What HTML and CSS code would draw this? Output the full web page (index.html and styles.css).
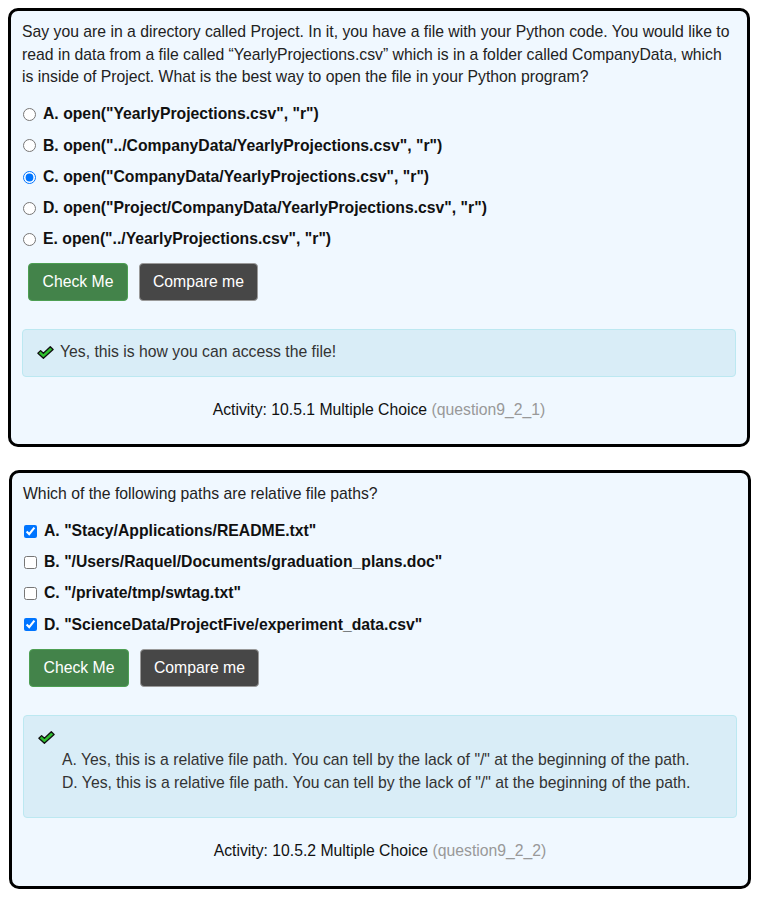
FILE: index.html
```html
<!DOCTYPE html>
<html>
<head>
<meta charset="utf-8">
<link rel="stylesheet" href="styles.css">
</head>
<body>
<div class="card">
  <p class="question">Say you are in a directory called Project. In it, you have a file with your Python code. You would like to read in data from a file called “YearlyProjections.csv” which is in a folder called CompanyData, which is inside of Project. What is the best way to open the file in your Python program?</p>
  <div class="options">
    <label class="option"><input type="radio" name="q1">A. open("YearlyProjections.csv", "r")</label>
    <label class="option"><input type="radio" name="q1">B. open("../CompanyData/YearlyProjections.csv", "r")</label>
    <label class="option"><input type="radio" name="q1" checked>C. open("CompanyData/YearlyProjections.csv", "r")</label>
    <label class="option"><input type="radio" name="q1">D. open("Project/CompanyData/YearlyProjections.csv", "r")</label>
    <label class="option"><input type="radio" name="q1">E. open("../YearlyProjections.csv", "r")</label>
  </div>
  <div class="buttons">
    <button class="btn btn-check">Check Me</button>
    <button class="btn btn-compare">Compare me</button>
  </div>
  <div class="feedback">
    <svg class="ok" width="17" height="13" viewBox="0 0 17 13"><path d="M0.9 7.2 L3.6 4.6 L6.4 7.3 L13.3 0.8 L16.1 3.5 L6.4 12.3 Z" fill="#2fc12f" stroke="#111" stroke-width="1.3" stroke-linejoin="round"/></svg>
    <span>Yes, this is how you can access the file!</span>
  </div>
  <div class="activity">Activity: 10.5.1 Multiple Choice <span class="qid">(question9_2_1)</span></div>
</div>

<div class="card card2">
  <p class="question">Which of the following paths are relative file paths?</p>
  <div class="options">
    <label class="option"><input type="checkbox" checked>A. "Stacy/Applications/README.txt"</label>
    <label class="option"><input type="checkbox">B. "/Users/Raquel/Documents/graduation_plans.doc"</label>
    <label class="option"><input type="checkbox">C. "/private/tmp/swtag.txt"</label>
    <label class="option"><input type="checkbox" checked>D. "ScienceData/ProjectFive/experiment_data.csv"</label>
  </div>
  <div class="buttons">
    <button class="btn btn-check">Check Me</button>
    <button class="btn btn-compare">Compare me</button>
  </div>
  <div class="feedback feedback-multi">
    <div class="icon-line"><svg class="ok" width="17" height="13" viewBox="0 0 17 13"><path d="M0.9 7.2 L3.6 4.6 L6.4 7.3 L13.3 0.8 L16.1 3.5 L6.4 12.3 Z" fill="#2fc12f" stroke="#111" stroke-width="1.3" stroke-linejoin="round"/></svg></div>
    <div class="fb-list">
      <div>A. Yes, this is a relative file path. You can tell by the lack of "/" at the beginning of the path.</div>
      <div>D. Yes, this is a relative file path. You can tell by the lack of "/" at the beginning of the path.</div>
    </div>
  </div>
  <div class="activity">Activity: 10.5.2 Multiple Choice <span class="qid">(question9_2_2)</span></div>
</div>
</body>
</html>
```

FILE: styles.css
```css
html, body {
  margin: 0;
  padding: 0;
  background: #ffffff;
}
body {
  padding: 8px;
  font-family: "Liberation Sans", Arial, sans-serif;
  font-size: 15.75px;
  line-height: 22.5px;
  color: #222;
}
.card {
  width: 742px;
  box-sizing: border-box;
  background: #f0f8ff;
  border: 3px solid #000;
  border-radius: 10px;
  padding: 10px 11px 23px 11px;
}
.card2 {
  margin-top: 23px;
  margin-left: 1px;
}
.question {
  margin: 0 0 14.75px 0;
}
.card2 .question {
  margin-bottom: 14px;
}
.options {
  display: flex;
  flex-direction: column;
  gap: 8.75px;
}
.option {
  display: flex;
  align-items: center;
  font-weight: bold;
  color: #111;
  height: 22.5px;
  white-space: nowrap;
}
.option input {
  margin: 0 7px 0 1px;
  width: 13px;
  height: 13px;
}
.buttons {
  display: flex;
  gap: 11px;
  margin-top: 12.5px;
  padding-left: 6px;
}
.btn {
  font-family: "Liberation Sans", Arial, sans-serif;
  font-size: 15.75px;
  color: #fff;
  height: 38px;
  padding: 0;
  border-radius: 4px;
  white-space: nowrap;
  cursor: pointer;
}
.btn-check {
  background: #43834a;
  border: 1px solid #4d9f53;
  width: 100px;
}
.btn-compare {
  background: #474747;
  border: 1px solid #9a9a9a;
  width: 119px;
}
.feedback {
  margin-top: 28px;
  background: #d9edf7;
  border: 1px solid #bce8f1;
  border-radius: 4px;
  padding: 11px 13px 12px 14px;
  color: #333;
  display: flex;
  align-items: center;
  gap: 6px;
}
.feedback-multi {
  display: block;
  padding-bottom: 23px;
}
.icon-line {
  height: 22.5px;
  display: flex;
  align-items: center;
}
.fb-list {
  padding-left: 24px;
}
.ok {
  display: block;
  flex: none;
}
.activity {
  margin-top: 22px;
  text-align: center;
  color: #111;
}
.qid {
  color: #999;
}
```
